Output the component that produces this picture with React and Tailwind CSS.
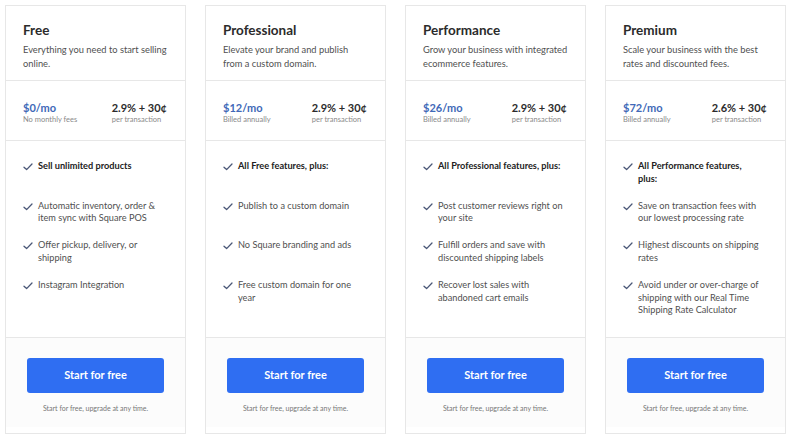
import React from "react";

const plans = [
  {
    name: "Free",
    desc: ["Everything you need to start selling", "online."],
    price: "$0/mo",
    priceSub: "No monthly fees",
    rate: "2.9% + 30¢",
    features: [
      { text: ["Sell unlimited products"], bold: true },
      { text: ["Automatic inventory, order &", "item sync with Square POS"] },
      { text: ["Offer pickup, delivery, or", "shipping"] },
      { text: ["Instagram Integration"] },
    ],
  },
  {
    name: "Professional",
    desc: ["Elevate your brand and publish", "from a custom domain."],
    price: "$12/mo",
    priceSub: "Billed annually",
    rate: "2.9% + 30¢",
    features: [
      { text: ["All Free features, plus:"], bold: true },
      { text: ["Publish to a custom domain"] },
      { text: ["No Square branding and ads"] },
      { text: ["Free custom domain for one", "year"] },
    ],
  },
  {
    name: "Performance",
    desc: ["Grow your business with integrated", "ecommerce features."],
    price: "$26/mo",
    priceSub: "Billed annually",
    rate: "2.9% + 30¢",
    features: [
      { text: ["All Professional features, plus:"], bold: true },
      { text: ["Post customer reviews right on", "your site"] },
      { text: ["Fulfill orders and save with", "discounted shipping labels"] },
      { text: ["Recover lost sales with", "abandoned cart emails"] },
    ],
  },
  {
    name: "Premium",
    desc: ["Scale your business with the best", "rates and discounted fees."],
    price: "$72/mo",
    priceSub: "Billed annually",
    rate: "2.6% + 30¢",
    features: [
      { text: ["All Performance features,", "plus:"], bold: true },
      { text: ["Save on transaction fees with", "our lowest processing rate"] },
      { text: ["Highest discounts on shipping", "rates"] },
      {
        text: [
          "Avoid under or over-charge of",
          "shipping with our Real Time",
          "Shipping Rate Calculator",
        ],
      },
    ],
  },
];

function Check() {
  return (
    <svg width="10" height="8" viewBox="0 0 10 8" className="mt-[3px] shrink-0">
      <path
        d="M1 4.2 L3.6 6.6 L9 1"
        fill="none"
        stroke="#4a5777"
        strokeWidth="1.3"
        strokeLinecap="round"
        strokeLinejoin="round"
      />
    </svg>
  );
}

function Card({ p }) {
  return (
    <div className="flex w-[181px] flex-col border border-[#e7e7e7] bg-white">
      <div className="h-[75px] border-b border-[#e7e7e7] px-[17px] pt-[16px]">
        <div className="text-[13.5px] font-bold leading-[16px] text-[#2b2b2b]">{p.name}</div>
        <div className="mt-[5px] text-[9.3px] leading-[14px] text-[#505050]">
          {p.desc.map((l, i) => (
            <div key={i} className="whitespace-nowrap">{l}</div>
          ))}
        </div>
      </div>
      <div className="flex h-[60px] justify-between border-b border-[#e7e7e7] pl-[17px] pr-[18px] pt-[20px]">
        <div>
          <div className="text-[11px] font-bold leading-[14px] text-[#4169b8]">{p.price}</div>
          <div className="text-[7.5px] leading-[10px] text-[#8a8a8a]">{p.priceSub}</div>
        </div>
        <div>
          <div className="text-[11px] font-bold leading-[14px] text-[#2b2b2b]">{p.rate}</div>
          <div className="text-[7.5px] leading-[10px] text-[#8a8a8a]">per transaction</div>
        </div>
      </div>
      <div className="h-[197px] border-b border-[#e7e7e7] pl-[17px] pt-[19px]">
        {p.features.map((f, i) => (
          <div key={i} className="flex h-[39.7px] gap-[5px]">
            <Check />
            <div
              className={`text-[9.2px] leading-[12.5px] ${
                f.bold ? "font-bold text-[#222]" : "text-[#505050]"
              }`}
            >
              {f.text.map((l, j) => (
                <div key={j} className="whitespace-nowrap">{l}</div>
              ))}
            </div>
          </div>
        ))}
      </div>
      <div className="flex h-[89px] flex-col items-center bg-[#fcfcfc] pt-[20px]">
        <div className="flex h-[35px] w-[137px] items-center justify-center rounded-[3px] bg-[#2f6ef2] text-[11px] font-bold text-white">
          Start for free
        </div>
        <div className="mt-[10px] text-[7px] leading-[10px] text-[#777]">
          Start for free, upgrade at any time.
        </div>
      </div>
    </div>
  );
}

export default function App() {
  return (
    <div
      className="flex h-[434px] w-[790px] gap-[19px] bg-white pl-[5px] pt-[5px]"
      style={{ fontFamily: "Lato, 'Open Sans', sans-serif" }}
    >
      {plans.map((p) => (
        <Card key={p.name} p={p} />
      ))}
    </div>
  );
}
